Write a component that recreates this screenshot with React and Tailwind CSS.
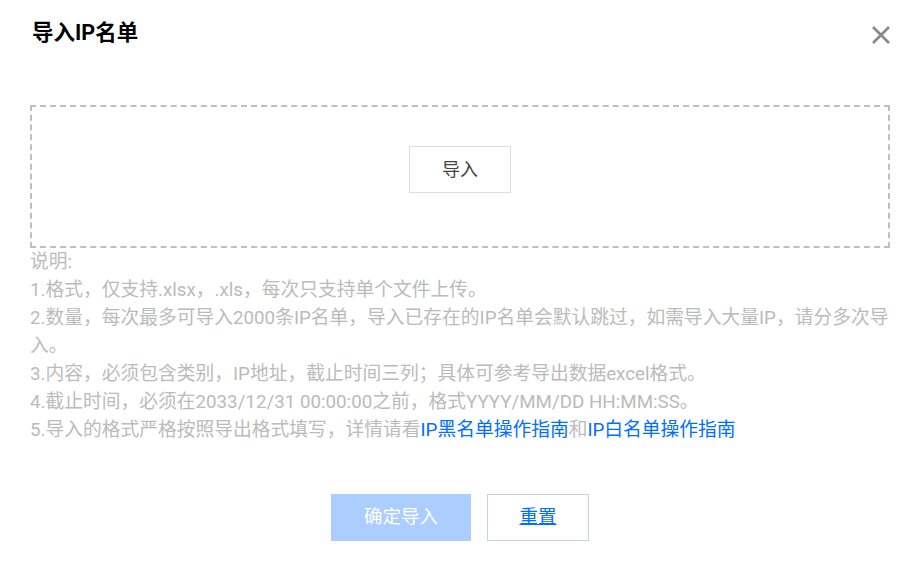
import React from 'react';

const font = { fontFamily: "Roboto, 'Noto Sans CJK SC', sans-serif" };

const CloseIcon = () => (
  <svg width="20" height="20" viewBox="0 0 20 20" fill="none">
    <path d="M2 2L18 18M18 2L2 18" stroke="#888888" strokeWidth="2.6" />
  </svg>
);

const App = () => {
  return (
    <div className="w-[924px] h-[564px] bg-white relative" style={font}>
      <div className="flex items-start justify-between pl-[32px] pr-[34px] pt-[19px]">
        <h1 className="text-[21.5px] leading-[28px] font-bold text-black">导入IP名单</h1>
        <button className="mt-[6px] -mr-[1px]">
          <CloseIcon />
        </button>
      </div>

      <div className="ml-[30px] w-[860px] mt-[58px]">
        <div className="h-[143px] border-2 border-dashed border-[#bfbfbf] flex justify-center pt-[39px]">
          <button className="w-[102px] h-[47px] border border-[#dcdcdc] text-[18px] text-[#444] bg-white">
            导入
          </button>
        </div>

        <div className="text-[18.75px] leading-[28px] text-[#bbbbbb]">
          <p>说明:</p>
          <p>1.格式，仅支持.xlsx，.xls，每次只支持单个文件上传。</p>
          <p>2.数量，每次最多可导入2000条IP名单，导入已存在的IP名单会默认跳过，如需导入大量IP，请分多次导入。</p>
          <p>3.内容，必须包含类别，IP地址，截止时间三列；具体可参考导出数据excel格式。</p>
          <p>4.截止时间，必须在2033/12/31 00:00:00之前，格式YYYY/MM/DD HH:MM:SS。</p>
          <p>
            5.导入的格式严格按照导出格式填写，详情请看
            <a className="text-[#006eff]">IP黑名单操作指南</a>和
            <a className="text-[#006eff]">IP白名单操作指南</a>
          </p>
        </div>

        <div className="flex justify-center gap-[16px] mt-[50px]">
          <button className="w-[140px] h-[47px] bg-[#abcdff] text-white text-[18.5px]">确定导入</button>
          <button className="w-[102px] h-[47px] border border-[#ccd2dc] text-[#006eff] text-[18.5px] underline bg-white">
            重置
          </button>
        </div>
      </div>
    </div>
  );
};

export default App;
